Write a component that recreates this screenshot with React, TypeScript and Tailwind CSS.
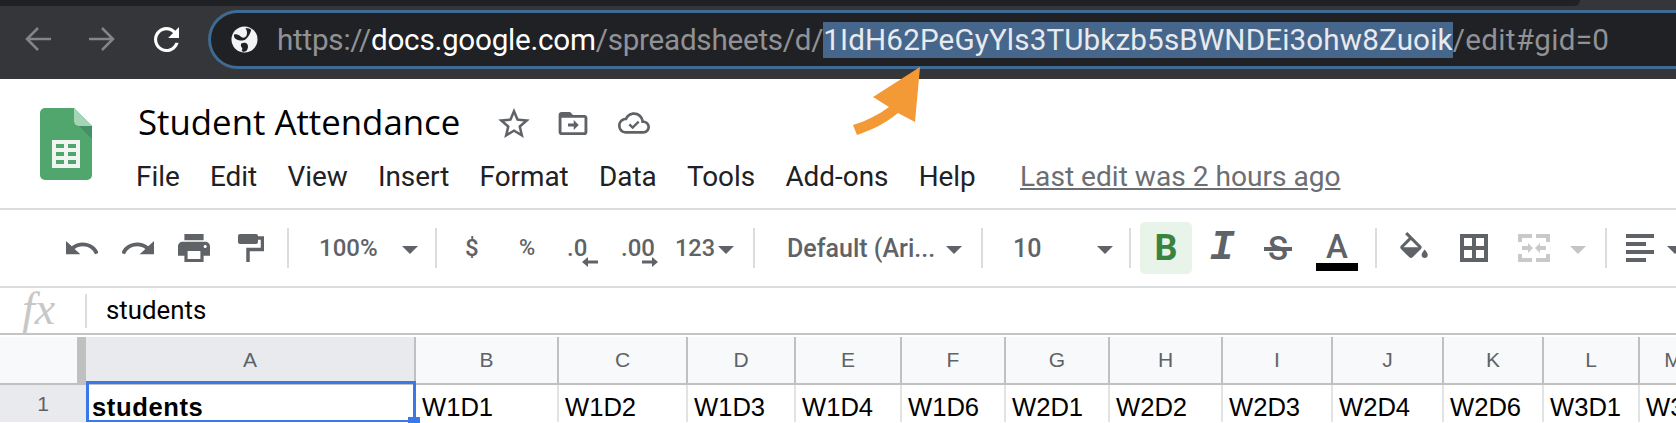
const columns = [
  { label: "A", cell: "students", active: true },
  { label: "B", cell: "W1D1" },
  { label: "C", cell: "W1D2" },
  { label: "D", cell: "W1D3" },
  { label: "E", cell: "W1D4" },
  { label: "F", cell: "W1D6" },
  { label: "G", cell: "W2D1" },
  { label: "H", cell: "W2D2" },
  { label: "I", cell: "W2D3" },
  { label: "J", cell: "W2D4" },
  { label: "K", cell: "W2D6" },
  { label: "L", cell: "W3D1" },
  { label: "M", cell: "W3D2" },
];

const gridCols = "grid grid-cols-[86px_330px_143px_129px_108px_106px_104px_104px_113px_110px_111px_100px_96px_68px]";

const Sep = ({ className }: { className: string }) => (
  <div className={`w-[2px] h-[40px] shrink-0 bg-[#dadce0] ${className}`} />
);

const Caret = ({ className, light }: { className: string; light?: boolean }) => (
  <svg viewBox="0 0 16 8" className={`w-[16px] h-[8px] shrink-0 mt-[3px] ${className}`}>
    <path d="M0 0h16L8 8z" fill={light ? "#c4c4c4" : "#5f6368"} />
  </svg>
);

const ToolText = ({ className, children }: { className: string; children: React.ReactNode }) => (
  <div className={`shrink-0 whitespace-nowrap font-['Roboto',sans-serif] font-medium text-[#5f6368] leading-none ${className}`}>
    {children}
  </div>
);

const SheetsLogo = () => (
  <svg viewBox="0 0 52 72" className="w-[52px] h-[72px] shrink-0">
    <path d="M5 0h29l18 18v49a5 5 0 0 1-5 5H5a5 5 0 0 1-5-5V5a5 5 0 0 1 5-5z" fill="#51a66d" />
    <path d="M34 13l18 18V18l-9-5z" fill="#458f66" />
    <path d="M34 0l18 18H39a5 5 0 0 1-5-5z" fill="#a5d5b7" />
    <path d="M12 32h28v28H12z" fill="#f1f5f1" />
    <path d="M16 36h8v4h-8zM28 36h8v4h-8zM16 44h8v4h-8zM28 44h8v4h-8zM16 52h8v4h-8zM28 52h8v4h-8z" fill="#51a66d" />
  </svg>
);

const MergeIcon = () => (
  <svg viewBox="0 0 32 28" className="w-[32px] h-[28px] ml-[30px] shrink-0" fill="#c9c9c9">
    <path d="M0 0h14v4H4v4H0zM18 0h14v8h-4V4H18zM0 20h4v4h10v4H0zM28 20h4v8H18v-4h10z" />
    <path d="M4 12h6V9l5 5-5 5v-3H4zM28 12h-6V9l-5 5 5 5v-3h6z" />
  </svg>
);

function App() {
  return (
    <div className="relative w-[1676px] h-[423px] overflow-hidden bg-white font-['Roboto',sans-serif]">
      {/* browser chrome */}
      <div className="h-[79px] bg-[#35363a]">
        <div className="h-[6px] w-[1580px] bg-[#202124] rounded-br-[6px]" />
        <div className="flex items-center h-[73px] pb-[7px]">
          <svg viewBox="0 0 26 24" className="w-[26px] h-[24px] ml-[25px] shrink-0" fill="none" stroke="#848587" strokeWidth="2.5">
            <path d="M26 12H2M13 1L2 12l11 11" />
          </svg>
          <svg viewBox="0 0 26 24" className="w-[26px] h-[24px] ml-[38px] shrink-0" fill="none" stroke="#848587" strokeWidth="2.5">
            <path d="M0 12h24M13 1l11 11-11 11" />
          </svg>
          <svg viewBox="4 4 16 16" className="w-[27px] h-[25px] ml-[38px] shrink-0" fill="#ffffff">
            <path d="M17.65 6.35C16.2 4.9 14.21 4 12 4c-4.42 0-7.99 3.58-7.99 8s3.57 8 7.99 8c3.73 0 6.84-2.55 7.73-6h-2.08c-.82 2.33-3.04 4-5.65 4-3.31 0-6-2.69-6-6s2.69-6 6-6c1.66 0 3.14.69 4.22 1.78L13 11h7V4l-2.35 2.35z" />
          </svg>
          <div className="flex items-center flex-1 h-[59px] ml-[28px] pl-[20px] bg-[#202124] border-[3.5px] border-r-0 border-[#3f6a93] rounded-l-[30px]">
            <svg viewBox="0 0 28 28" className="w-[27px] h-[27px] shrink-0">
              <circle cx="14" cy="14" r="13.5" fill="#f1f3f4" />
              <path d="M3 9c3-1 5 0 7 2s5 1 6-1 1-5-1-8c3 0 5 1 6 2-1 4-3 8-6 10s-7 1-9 0-3-2-3-5z" fill="#202124" />
              <path d="M11 18c2-1 5-1 6 1s1 4-1 7c-2 1-4 1-5 0 1-2 1-3 0-4s-1-3 0-4z" fill="#202124" />
            </svg>
            <div className="ml-[19px] mt-[2px] whitespace-nowrap text-[29.64px] leading-[36px] text-[#909295]">
              <span className="tracking-[-0.25px]">https://<span className="text-white">docs.google.com</span>/spreadsheets/d/</span>
              <span className="bg-[#46668c] text-[#e8eaed] py-[1px] tracking-[0.14px]">1IdH62PeGyYls3TUbkzb5sBWNDEi3ohw8Zuoik</span>
              <span className="tracking-[0.3px]">/edit#gid=0</span>
            </div>
          </div>
        </div>
      </div>

      {/* doc title + menu */}
      <div className="flex h-[131px] border-b-2 border-[#dadce0] pl-[40px] pt-[29px]">
        <SheetsLogo />
        <div className="ml-[46px]">
          <div className="flex items-center h-[30px]">
            <div className="text-[34.8px] leading-[30px] mt-[-3px] text-black whitespace-nowrap font-['Open_Sans',sans-serif] w-[360px]">Student Attendance</div>
            <svg viewBox="2 2 20 19" className="w-[32px] h-[30px] shrink-0" fill="#5f6368">
              <path d="M22 9.24l-7.19-.62L12 2 9.19 8.63 2 9.24l5.46 4.73L5.82 21 12 17.27 18.18 21l-1.63-7.03L22 9.24zM12 15.4l-3.76 2.27 1-4.28-3.32-2.88 4.38-.38L12 6.1l1.71 4.04 4.38.38-3.32 2.88 1 4.28L12 15.4z" />
            </svg>
            <svg viewBox="2 4 20 16" className="w-[30px] h-[23px] ml-[28px] shrink-0" fill="#5f6368">
              <path d="M20 6h-8l-2-2H4c-1.1 0-2 .9-2 2v12c0 1.1.9 2 2 2h16c1.1 0 2-.9 2-2V8c0-1.1-.9-2-2-2zm0 12H4V8h16v10z" />
              <path d="M12.5 9.5l3.5 3.5-3.5 3.5V14H8.5v-2h4z" />
            </svg>
            <svg viewBox="0 4 24 16" className="w-[32px] h-[22px] ml-[30px] shrink-0" fill="#5f6368">
              <path d="M19.35 10.04C18.67 6.59 15.64 4 12 4 9.11 4 6.6 5.64 5.35 8.04 2.34 8.36 0 10.91 0 14c0 3.31 2.69 6 6 6h13c2.76 0 5-2.24 5-5 0-2.64-2.05-4.78-4.65-4.96zM19 18H6c-2.21 0-4-1.79-4-4s1.79-4 4-4h.71C7.37 7.69 9.48 6 12 6c3.04 0 5.5 2.46 5.5 5.5v.5H19c1.66 0 3 1.34 3 3s-1.34 3-3 3z" />
              <path d="M8.5 13l2.5 2.5 4.5-4.5" fill="none" stroke="#5f6368" strokeWidth="1.8" />
            </svg>
          </div>
          <div className="flex items-center gap-[30.2px] mt-[25px] ml-[-2px] text-[27.9px] leading-[28px] text-[#202124] whitespace-nowrap">
            <span>File</span>
            <span>Edit</span>
            <span>View</span>
            <span>Insert</span>
            <span>Format</span>
            <span>Data</span>
            <span>Tools</span>
            <span>Add-ons</span>
            <span>Help</span>
            <span className="ml-[14px] underline text-[28.1px] text-[#6b6e72]">Last edit was 2 hours ago</span>
          </div>
        </div>
      </div>

      {/* toolbar */}
      <div className="flex items-center h-[78px] border-b-2 border-[#dadce0] pl-[66px]">
        <svg viewBox="2 7 20 9.5" preserveAspectRatio="none" className="w-[32px] h-[14px] shrink-0" fill="#5f6368">
          <path d="M12.5 8c-2.65 0-5.05.99-6.9 2.6L2 7v9h9l-3.62-3.62c1.39-1.16 3.16-1.88 5.12-1.88 3.54 0 6.55 2.31 7.6 5.5l2.37-.78C21.08 11.03 17.15 8 12.5 8z" />
        </svg>
        <svg viewBox="2 7 20 9.5" preserveAspectRatio="none" className="w-[32px] h-[14px] ml-[24px] shrink-0" fill="#5f6368">
          <path d="M18.4 10.6C16.55 8.99 14.15 8 11.5 8c-4.65 0-8.58 3.03-9.96 7.22L3.9 16c1.05-3.19 4.05-5.5 7.6-5.5 1.95 0 3.73.72 5.12 1.88L13 16h9V7z" />
        </svg>
        <svg viewBox="2 3 20 18" preserveAspectRatio="none" className="w-[32px] h-[28px] ml-[24px] shrink-0" fill="#5f6368">
          <path d="M19 8H5c-1.66 0-3 1.34-3 3v6h4v4h12v-4h4v-6c0-1.66-1.34-3-3-3zm-3 11H8v-5h8v5zm3-7c-.55 0-1-.45-1-1s.45-1 1-1 1 .45 1 1-.45 1-1 1zm-1-9H6v4h12V3z" />
        </svg>
        <svg viewBox="0 0 26 28" className="w-[26px] h-[28px] ml-[28px] shrink-0">
          <rect x="0" y="0" width="20" height="10" rx="2" fill="#5f6368" />
          <path d="M20 4h4.5v11.5H10V28" fill="none" stroke="#5f6368" strokeWidth="3.5" />
        </svg>
        <Sep className="ml-[23px]" />
        <ToolText className="ml-[30px] w-[57px] text-[24px]">100%</ToolText>
        <Caret className="ml-[26px]" />
        <Sep className="ml-[17px]" />
        <ToolText className="ml-[28px] w-[14px] text-[24px]">$</ToolText>
        <ToolText className="ml-[40px] w-[18px] text-[22px]">%</ToolText>
        <ToolText className="relative ml-[30px] w-[24px] text-[24px]">
          .0
          <svg viewBox="0 0 16 10" className="absolute left-[15px] top-[21px] w-[16px] h-[10px]" fill="#5f6368">
            <path d="M16 3.5H6V0L0 5l6 5V6.5h10z" />
          </svg>
        </ToolText>
        <ToolText className="relative ml-[30px] w-[33px] text-[24px]">
          .00
          <svg viewBox="0 0 16 10" className="absolute left-[21px] top-[21px] w-[16px] h-[10px]" fill="#5f6368">
            <path d="M0 3.5h10V0l6 5-6 5V6.5H0z" />
          </svg>
        </ToolText>
        <ToolText className="ml-[21px] mt-[2px] w-[40px] text-[23.5px]">123</ToolText>
        <Caret className="ml-[3px]" />
        <Sep className="ml-[19px]" />
        <ToolText className="ml-[32px] w-[138px] text-[25px]">Default (Ari...</ToolText>
        <Caret className="ml-[21px]" />
        <Sep className="ml-[19px]" />
        <ToolText className="ml-[30px] w-[25px] text-[25px]">10</ToolText>
        <Caret className="ml-[59px]" />
        <Sep className="ml-[16px]" />
        <div className="flex items-center justify-center w-[52px] h-[52px] ml-[9px] shrink-0 rounded-[5px] bg-[#e8f3ea] text-[#38843f] text-[36px] font-bold leading-none">B</div>
        <div className="flex justify-center w-[24px] ml-[18px] shrink-0 font-['Liberation_Mono',monospace] font-bold italic text-[#5f6368] text-[42px] leading-none">I</div>
        <div className="relative flex justify-center w-[28px] ml-[30px] shrink-0 text-[#5f6368] text-[33px] font-medium leading-none">
          S
          <div className="absolute left-0 right-0 top-[15px] h-[4px] bg-[#5f6368]" />
        </div>
        <div className="flex flex-col items-center w-[42px] ml-[24px] mt-[6px] shrink-0">
          <div className="text-[#5f6368] text-[33px] font-medium leading-[30px]">A</div>
          <div className="w-[42px] h-[8px] bg-black mt-[1px]" />
        </div>
        <Sep className="ml-[17px]" />
        <svg viewBox="3 0 18 17" className="w-[28px] h-[26px] ml-[23px] mb-[6px] shrink-0" fill="#5f6368">
          <path d="M16.56 8.94L7.62 0 6.21 1.41l2.38 2.38-5.15 5.15c-.59.59-.59 1.54 0 2.12l5.5 5.5c.29.29.68.44 1.06.44s.77-.15 1.06-.44l5.5-5.5c.59-.58.59-1.53 0-2.12zM5.21 10L10 5.21 14.79 10H5.21zM19 11.5s-2 2.17-2 3.5c0 1.1.9 2 2 2s2-.9 2-2c0-1.33-2-3.5-2-3.5z" />
        </svg>
        <svg viewBox="0 0 28 28" className="w-[28px] h-[28px] ml-[32px] shrink-0" fill="none" stroke="#5f6368" strokeWidth="4">
          <path d="M2 2h24v24H2zM14 2v24M2 14h24" />
        </svg>
        <MergeIcon />
        <Caret className="ml-[20px]" light />
        <Sep className="ml-[19px]" />
        <svg viewBox="0 0 28 28" className="w-[28px] h-[28px] ml-[19px] shrink-0" fill="#5f6368">
          <path d="M0 0h28v4H0zM0 8h20v4H0zM0 16h28v4H0zM0 24h20v4H0z" />
        </svg>
        <Caret className="ml-[13px]" />
      </div>

      {/* formula bar */}
      <div className="flex items-center h-[47px] border-b-2 border-[#c4c4c4]">
        <div className="w-[85px] shrink-0 pl-[22px] font-['Liberation_Serif',serif] italic text-[46px] leading-none text-[#c7c7c7] mt-[-4px]">fx</div>
        <div className="w-[2px] h-[34px] bg-[#dadce0] shrink-0" />
        <div className="ml-[19px] text-[25.8px] text-black">students</div>
      </div>

      {/* sheet */}
      <div className="relative pt-[2px]">
        <div className={`${gridCols} h-[46px]`}>
          <div className="bg-[#f8f9fa] border-r-[9px] border-[#c0c0c0]" />
          {columns.map((col) => (
            <div
              key={col.label}
              className={`flex items-center justify-center border-r-2 border-[#c0c0c0] text-[21px] text-[#5f6368] font-['Liberation_Sans',sans-serif] ${col.active ? "bg-[#e8eaed]" : "bg-[#f8f9fa]"}`}
            >
              {col.label}
            </div>
          ))}
        </div>
        <div className="h-[2px] bg-[#c0c0c0]" />
        <div className={`${gridCols} h-[37px]`}>
          <div className="flex items-center justify-center bg-[#e8eaed] text-[21px] text-[#5f6368] font-['Liberation_Sans',sans-serif]">1</div>
          {columns.map((col) => (
            <div
              key={col.label}
              className={`flex items-center pl-[6px] pt-[7px] border-r-2 border-[#e2e3e3] text-[25.6px] text-black whitespace-nowrap overflow-hidden font-['Liberation_Sans',sans-serif] ${col.active ? "font-bold tracking-[0.6px]" : ""}`}
            >
              {col.cell}
            </div>
          ))}
        </div>
        {/* selected cell */}
        <div className="absolute left-[86px] top-[46px] w-[330px] h-[41px] border-[3px] border-b-2 border-[#3b78e7]" />
        <div className="absolute left-[408px] top-[82px] w-[12px] h-[6px] bg-[#3b78e7]" />
      </div>

      {/* annotation arrow */}
      <svg viewBox="0 0 1676 423" className="absolute inset-0 w-[1676px] h-[423px] pointer-events-none">
        <path d="M920 67L873 97L889 107C878 115 866 121 853 125L857 135C872 130 886 123 898 113L915 122z" fill="#f39a37" />
      </svg>
    </div>
  );
}

export default App;
